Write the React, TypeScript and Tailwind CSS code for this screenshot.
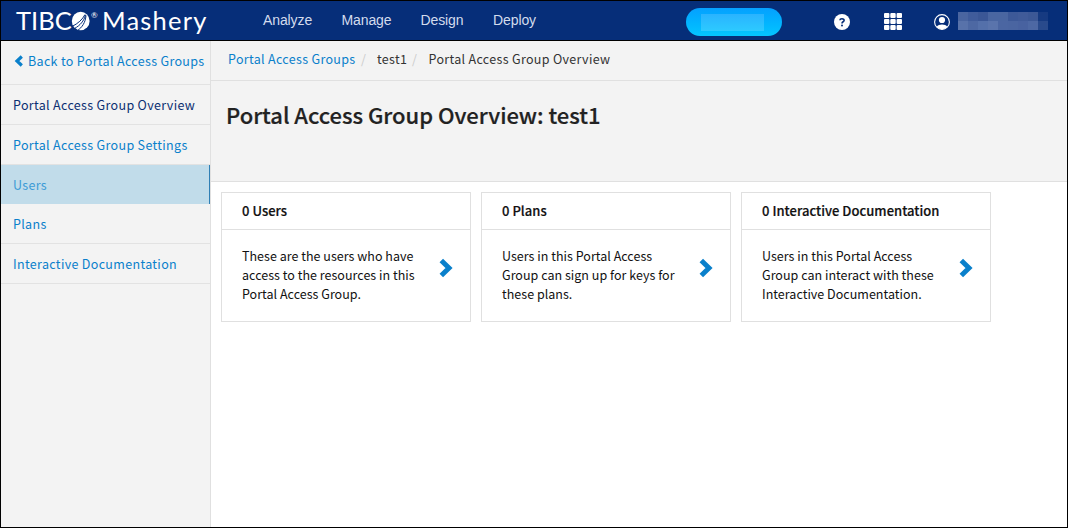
import React from 'react';

const TOP_LINKS = [
  { label: 'Analyze', box: 'w-[78.5px]' },
  { label: 'Manage', box: 'w-[79px]' },
  { label: 'Design', box: 'w-[72.5px]' },
  { label: 'Deploy', box: 'w-[60px]' },
];

const SIDE_LINKS = [
  { label: 'Portal Access Group Overview', style: 'h-10 border-b border-[#e2e2e2] text-[#0b2f72]' },
  { label: 'Portal Access Group Settings', style: 'h-10 border-b border-[#e2e2e2] text-[#0a80cb]' },
  { label: 'Users', style: 'h-[39px] border-r border-r-[#2f7fb5] bg-[#c1dcea] text-[#3d9bd6]' },
  { label: 'Plans', style: 'h-10 border-b border-[#e2e2e2] text-[#0a80cb]' },
  { label: 'Interactive Documentation', style: 'h-10 border-b border-[#e2e2e2] text-[#0a80cb]' },
];

const CARDS = [
  { title: '0 Users', lines: ['These are the users who have', 'access to the resources in this', 'Portal Access Group.'] },
  { title: '0 Plans', lines: ['Users in this Portal Access', 'Group can sign up for keys for', 'these plans.'] },
  {
    title: '0 Interactive Documentation',
    lines: ['Users in this Portal Access', 'Group can interact with these', 'Interactive Documentation.'],
  },
];

const USER_BLOCKS = [
  '#4a65a0', '#405c9b', '#3b5796', '#4a66a1', '#4a66a1', '#3d5998', '#405b99', '#3c5896', '#163a81',
  '#5872aa', '#4d68a3', '#5470aa', '#5a74ac', '#4b66a2', '#4a65a1', '#4862a0', '#4d68a4', '#294a8c',
];

function Logo() {
  return (
    <div className="flex h-full w-[247px] items-center pl-[15px] font-['Lato'] text-[25.5px] leading-[37px] text-white">
      <span className="w-[55px] whitespace-nowrap">TIBC</span>
      <svg width="20" height="20" viewBox="0 0 20 20" className="mt-[1px] shrink-0">
        <ellipse cx="9.7" cy="10" rx="8.9" ry="9.2" fill="#fff" />
        <path d="M1 15.500C7 12.500 11.500 8.500 14 3.500M3.500 17.500C9 14.500 13 10 14.500 4M6.500 19.500C11 16.500 14.500 11.500 15 4.500" stroke="#062e79" strokeWidth="1" fill="none" />
      </svg>
      <span className="mb-[12px] w-[11px] text-[8px] leading-[8px]">®</span>
      <span className="whitespace-nowrap tracking-[1.2px]">Mashery</span>
    </div>
  );
}

function TopBar() {
  return (
    <header className="flex h-10 shrink-0 items-center border-b border-black bg-[#062e79]">
      <Logo />
      <nav className="flex w-[438px] pb-[2px] pl-[15px] font-['Liberation_Sans'] text-[14px] leading-[20px] tracking-[-0.1px] text-[#d3dced]">
        {TOP_LINKS.map((l) => (
          <a key={l.label} className={l.box}>{l.label}</a>
        ))}
      </nav>
      <div className="mt-[2px] flex h-7 w-24 shrink-0 items-center rounded-full bg-linear-to-b from-[#06a0ff] to-[#05c5ff] pl-[15px]">
        <div className="mt-[2px] h-[17px] w-[63px] bg-linear-to-b from-[#2ab3ff] to-[#2dcaff]" />
      </div>
      <svg width="16" height="16" viewBox="0 0 16 16" className="mt-[2px] ml-[52px] shrink-0">
        <circle cx="8" cy="8" r="8" fill="#fff" />
        <path d="M5.900 6.300C6 4.300 10.200 4.300 10.100 6.500C10 7.900 8 7.700 8 9.400" stroke="#062e79" strokeWidth="1.600" fill="none" />
        <circle cx="8" cy="11.400" r="1" fill="#062e79" />
      </svg>
      <svg width="18" height="17" viewBox="0 0 18 17" className="mt-[1px] ml-[34px] shrink-0" fill="#fff">
        {[0, 6, 12].map((y) => [0, 6.300, 12.600].map((x) => <rect key={`${x}-${y}`} x={x} y={y} width="5.400" height="5" rx="1" />))}
      </svg>
      <svg width="16" height="16" viewBox="0 0 16 16" className="mt-[2px] ml-[32px] shrink-0">
        <circle cx="8" cy="8" r="7.400" stroke="#fff" strokeWidth="1.100" fill="none" />
        <circle cx="8" cy="6" r="3.100" fill="#fff" />
        <path d="M2.800 12.700C4.300 9.900 11.700 9.900 13.200 12.700C10.500 16 5.500 16 2.800 12.700Z" fill="#fff" />
      </svg>
      <div className="ml-2 grid w-[90px] shrink-0 grid-cols-9">
        {USER_BLOCKS.map((c, i) => (
          <span key={i} className="h-[9px]" style={{ backgroundColor: c }} />
        ))}
      </div>
    </header>
  );
}

function Sidebar() {
  return (
    <aside className="w-[210px] shrink-0 border-r border-[#e0e0e0] bg-[#f3f3f3] tracking-[0.33px]">
      <a className="flex h-11 items-center border-b border-[#e2e2e2] pb-[3px] pl-[13px] whitespace-nowrap text-[#0a80cb]">
        <svg width="10" height="12" viewBox="0 0 10 12" className="mr-[4px] shrink-0">
          <path d="M7.800 1.500L3 6L7.800 10.500" stroke="#0a80cb" strokeWidth="3.200" fill="none" />
        </svg>
        Back to Portal Access Groups
      </a>
      {SIDE_LINKS.map((l) => (
        <a key={l.label} className={`flex items-center pl-3 whitespace-nowrap ${l.style}`}>{l.label}</a>
      ))}
    </aside>
  );
}

function Card({ title, lines }: { title: string; lines: string[] }) {
  return (
    <section className="h-[130px] w-[250px] border border-[#e0e0e0] bg-white text-[#111]">
      <h2 className="h-[37px] border-b border-[#e0e0e0] pl-5 text-[13px] leading-[36px] font-medium tracking-[0.03px] [-webkit-text-stroke:0.2px_#111]">{title}</h2>
      <div className="flex pt-[16px] pl-5">
        <p className="w-[196px] leading-[19px] tracking-[0.02px] whitespace-nowrap">
          {lines.map((t) => (
            <span key={t} className="block">{t}</span>
          ))}
        </p>
        <svg width="16" height="20" viewBox="0 0 16 20" className="mt-[12px]">
          <path d="M3.300 2.500L11 10L3.300 17.500" stroke="#0a80cb" strokeWidth="5" fill="none" />
        </svg>
      </div>
    </section>
  );
}

export default function App() {
  return (
    <div className="flex h-[528px] w-[1068px] flex-col overflow-hidden border border-black bg-white font-['Noto_Sans_CJK_SC',sans-serif] text-[12.5px] leading-[20px]">
      <TopBar />
      <div className="flex min-h-0 flex-1">
        <Sidebar />
        <main className="flex-1">
          <div className="flex h-10 items-center border-b border-[#e0e0e0] bg-[#f3f3f3] pb-[3px] pl-[17px] whitespace-nowrap text-[#333] tracking-[0.32px]">
            <a className="w-[133px] text-[#0a80cb]">Portal Access Groups</a>
            <span className="w-[16px] text-[#ccc]">/</span>
            <span className="w-[35px]">test1</span>
            <span className="w-[16.500px] text-[#ccc]">/</span>
            <span>Portal Access Group Overview</span>
          </div>
          <div className="h-[101px] border-b border-[#e0e0e0] bg-[#f3f3f3] pt-[17px] pl-[15px]">
            <h1 className="text-[22px] leading-[32px] font-medium tracking-[-0.03px] text-[#222] [-webkit-text-stroke:0.2px_#222]">Portal Access Group Overview: test1</h1>
          </div>
          <div className="flex gap-[10px] pt-[10px] pl-[10px]">
            {CARDS.map((c) => (
              <Card key={c.title} {...c} />
            ))}
          </div>
        </main>
      </div>
    </div>
  );
}
